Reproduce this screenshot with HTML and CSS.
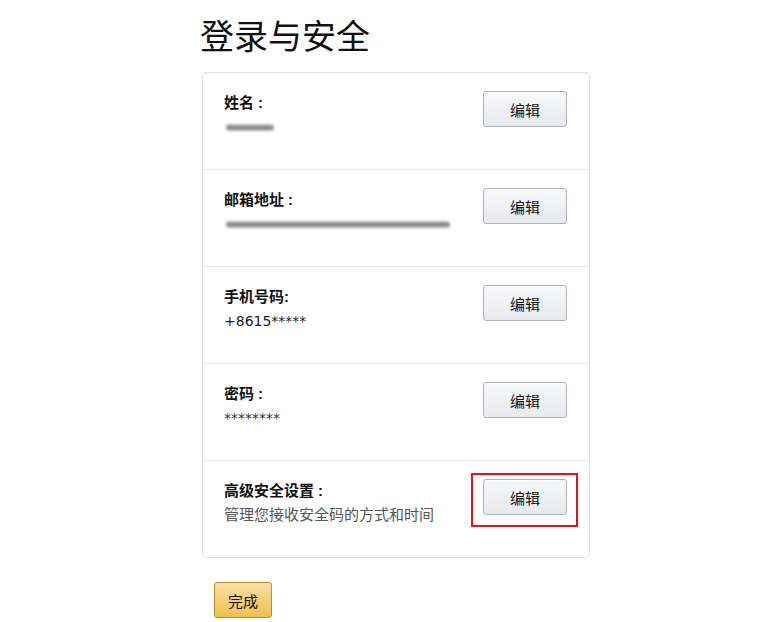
FILE: index.html
```html
<!DOCTYPE html>
<html lang="zh-CN">
<head>
  <meta charset="UTF-8" />
  <meta name="viewport" content="width=device-width, initial-scale=1.0"/>
  <title>登录与安全</title>
  <link rel="stylesheet" href="styles.css">
</head>
<body>
  <div class="page">
    <h1>登录与安全</h1>

    <div class="card">
      <div class="row">
        <div class="info">
          <div class="label">姓名<span class="colon">:</span></div>
          <div class="value"><span class="blurred short"></span></div>
        </div>
        <button class="edit">编辑</button>
      </div>

      <div class="row">
        <div class="info">
          <div class="label">邮箱地址<span class="colon">:</span></div>
          <div class="value"><span class="blurred long"></span></div>
        </div>
        <button class="edit">编辑</button>
      </div>

      <div class="row">
        <div class="info">
          <div class="label">手机号码:</div>
          <div class="value latin">+8615*****</div>
        </div>
        <button class="edit">编辑</button>
      </div>

      <div class="row">
        <div class="info">
          <div class="label">密码<span class="colon">:</span></div>
          <div class="value latin stars">********</div>
        </div>
        <button class="edit">编辑</button>
      </div>

      <div class="row">
        <div class="info">
          <div class="label">高级安全设置<span class="colon">:</span></div>
          <div class="value muted">管理您接收安全码的方式和时间</div>
        </div>
        <div class="highlight">
          <button class="edit">编辑</button>
        </div>
      </div>
    </div>

    <button class="done">完成</button>
  </div>
</body>
</html>
```

FILE: styles.css
```css
* {
  box-sizing: border-box;
}

body {
  margin: 0;
  background: #fff;
  font-family: "Liberation Sans", "Noto Sans CJK SC", sans-serif;
  color: #111;
}

.page {
  width: 388px;
  margin-left: 202px;
  padding-top: 17px;
}

h1 {
  margin: 0 0 14px -2px;
  font-size: 34px;
  font-weight: 400;
  line-height: 41px;
  color: #111;
}

.card {
  border: 1px solid #ddd;
  border-radius: 5px;
}

.row {
  height: 97px;
  display: flex;
  justify-content: space-between;
  align-items: flex-start;
  padding: 18px 22px 0 21px;
  border-top: 1px solid #e7e7e7;
}

.row:first-child {
  border-top: none;
  height: 96px;
}

.label {
  font-size: 15px;
  font-weight: 700;
  line-height: 22px;
  margin-top: 1px;
}

.colon {
  margin-left: 4px;
}

.value {
  font-size: 15px;
  line-height: 22px;
  margin-top: 2px;
  height: 22px;
  display: flex;
  align-items: center;
}

.value.latin {
  font-family: "DejaVu Sans", sans-serif;
  font-size: 14px;
  color: #222;
}

.value.stars {
  color: #333;
}

.value.muted {
  color: #555;
}

.blurred {
  display: inline-block;
  height: 7px;
  border-radius: 4px;
  background: linear-gradient(#ccc, #777 50%, #bbb);
  filter: blur(1.4px);
  margin-left: 2px;
}

.blurred.short {
  width: 48px;
}

.blurred.long {
  width: 224px;
}

.edit {
  width: 84px;
  height: 36px;
  padding: 0;
  border: 1px solid #adb1b8;
  border-radius: 3px;
  background: linear-gradient(#f7f8fa, #e7e9ec);
  box-shadow: 0 1px 0 rgba(255, 255, 255, 0.6) inset;
  font-family: inherit;
  font-size: 15px;
  color: #111;
  cursor: pointer;
}

.highlight {
  margin: -6px -11px 0 0;
  padding: 4px 9px 10px 10px;
  border: 2px solid #d9161c;
}

.done {
  margin: 24px 0 0 12px;
  width: 58px;
  height: 36px;
  padding: 0;
  border: 1px solid #b58d32;
  border-radius: 3px;
  background: linear-gradient(#f7dfa5, #f0c14b);
  font-family: inherit;
  font-size: 15px;
  color: #111;
  cursor: pointer;
}
```
